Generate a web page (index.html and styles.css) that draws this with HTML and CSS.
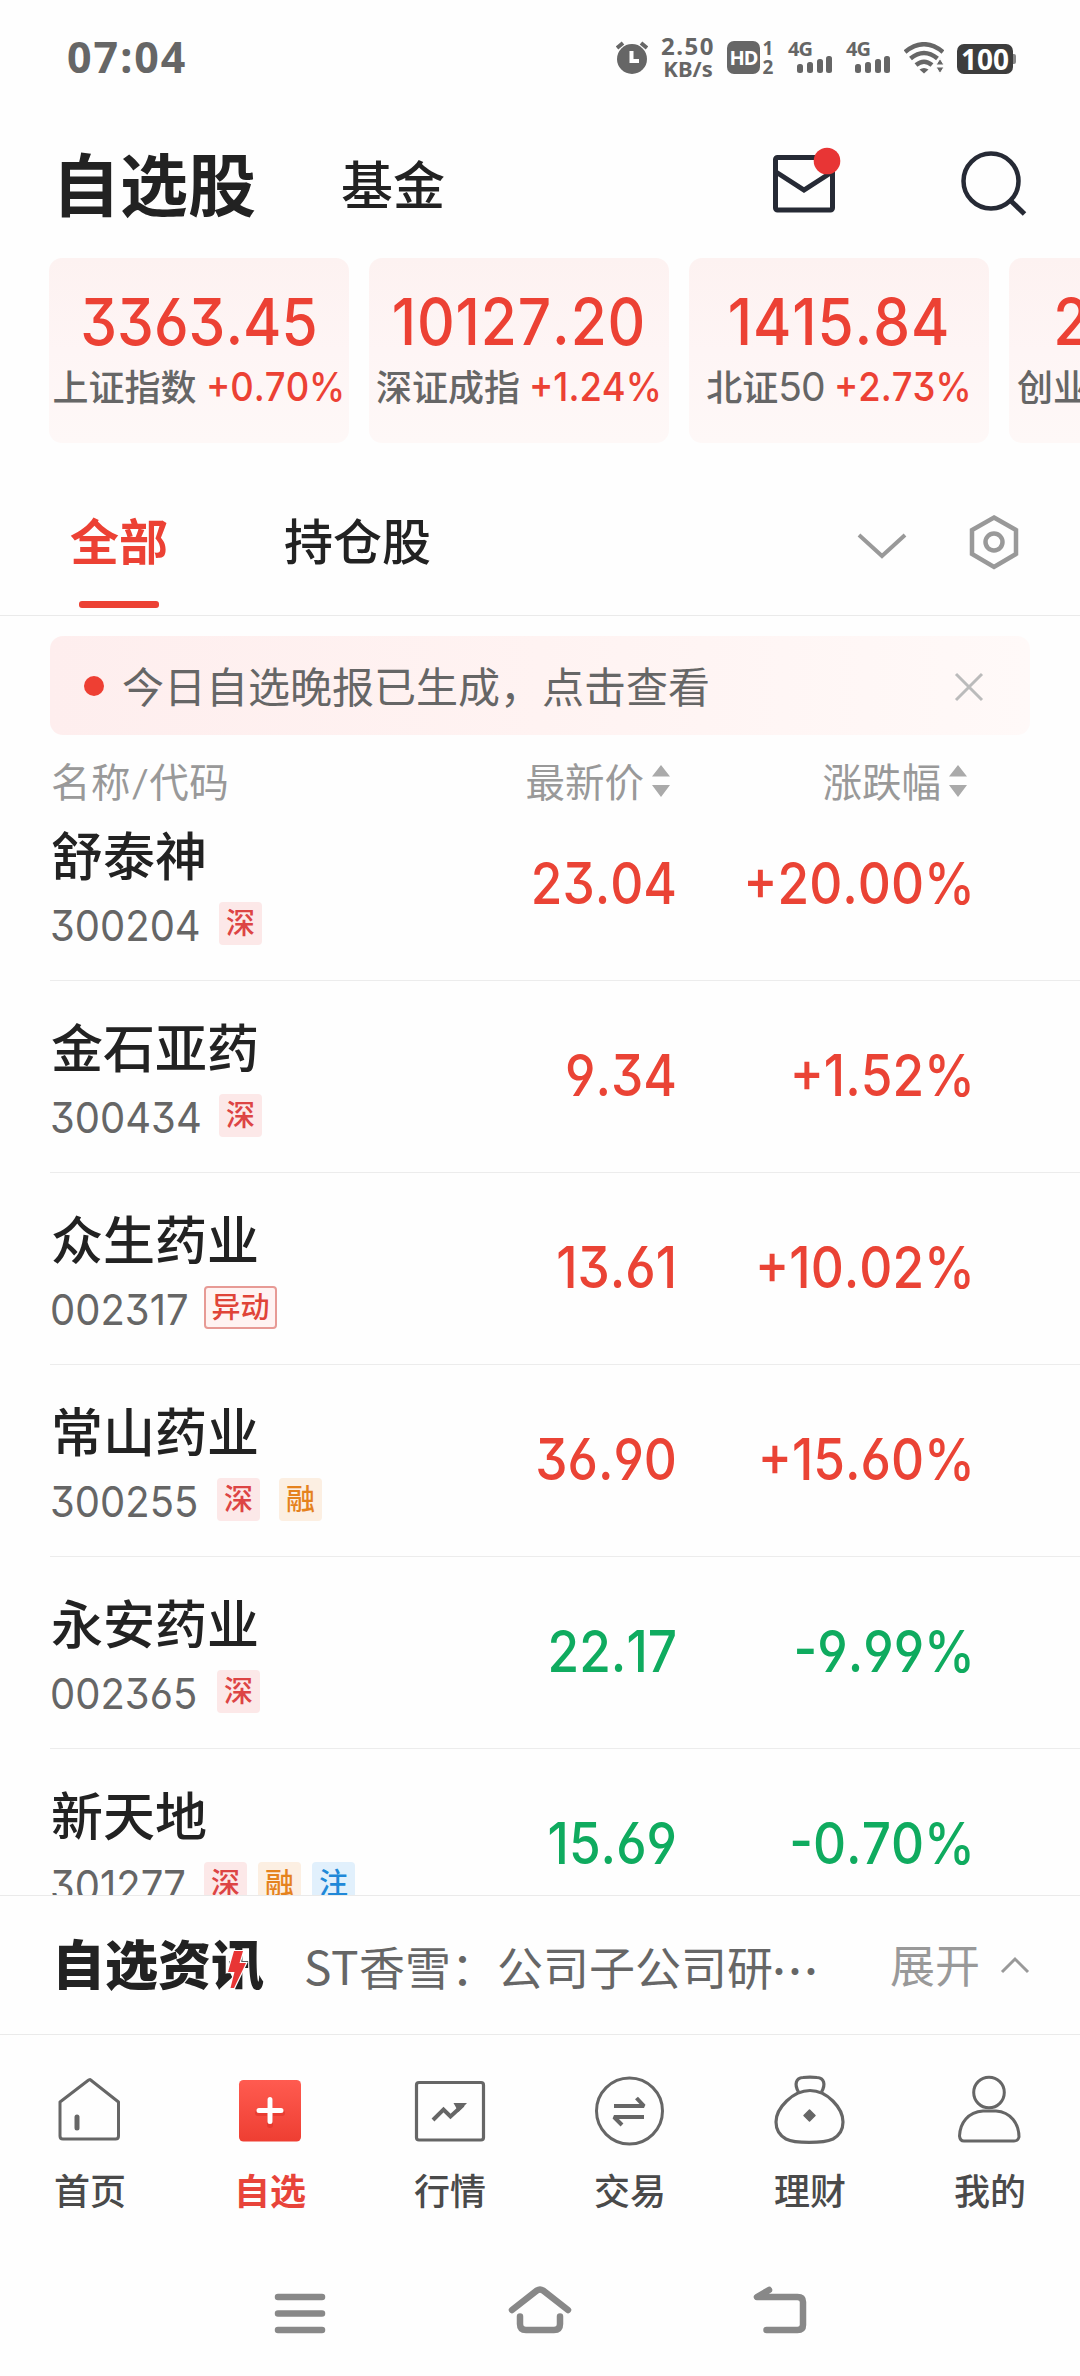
FILE: index.html
```html
<!DOCTYPE html>
<html lang="zh-CN">
<head>
    <meta charset="UTF-8">
    <meta name="viewport" content="width=device-width, initial-scale=1.0">
    <title>自选股</title>
    <link rel="stylesheet" href="styles.css">
</head>
<body>
    <div class="status-bar">
        <span class="clock">07:04</span>
        <div class="status-icons">
            <svg class="alarm" width="32" height="34" viewBox="0 0 32 34">
                <circle cx="16" cy="19" r="15" fill="#666"/>
                <path d="M1 8 L7 3 M31 8 L25 3" stroke="#666" stroke-width="4"/>
                <path d="M15.500 11 V21 H23" fill="none" stroke="#fff" stroke-width="4"/>
            </svg>
            <div class="net-speed"><span>2.50</span><span>KB/s</span></div>
            <div class="hd">HD</div>
            <div class="sim"><span>1</span><span>2</span></div>
            <div class="signal">
                <span>4G</span>
                <svg width="36" height="18" viewBox="0 0 36 18">
                    <g fill="#666">
                        <rect x="0" y="8" width="6" height="9" rx="2.500"/>
                        <rect x="10" y="6" width="6" height="11" rx="2.500"/>
                        <rect x="20" y="3" width="6" height="14" rx="2.500"/>
                        <rect x="29" y="0" width="6" height="17" rx="2.500"/>
                    </g>
                </svg>
            </div>
            <div class="signal">
                <span>4G</span>
                <svg width="36" height="18" viewBox="0 0 36 18">
                    <g fill="#666">
                        <rect x="0" y="8" width="6" height="9" rx="2.500"/>
                        <rect x="10" y="6" width="6" height="11" rx="2.500"/>
                        <rect x="20" y="3" width="6" height="14" rx="2.500"/>
                        <rect x="29" y="0" width="6" height="17" rx="2.500"/>
                    </g>
                </svg>
            </div>
            <svg class="wifi" width="40" height="32" viewBox="0 0 40 32">
                <g fill="none" stroke="#666" stroke-width="4.500">
                    <path d="M1 10 Q20 -5.500 39 10"/>
                    <path d="M6.500 16.500 Q20 5.500 33.500 16.500"/>
                    <path d="M12 23 Q20 16.500 28 23"/>
                </g>
                <path d="M15.500 27.500 Q20 24.500 24.500 27.500 L20 31.500 Z" fill="#666"/>
                <path d="M32 23 L36 16.500 L40 23 Z M32 25 H40 L36 31.500 Z" fill="#666" stroke="#fefefe" stroke-width="1"/>
            </svg>
            <div class="battery">100</div>
        </div>
    </div>

    <div class="header">
        <span class="title">自选股</span>
        <span class="sub-title">基金</span>
        <div class="header-icons">
            <svg width="74" height="76" viewBox="0 0 74 76">
                <rect x="5.500" y="11.500" width="57" height="52.500" rx="2" fill="none" stroke="#262a35" stroke-width="5"/>
                <path d="M6 26 L34 44 L62 26" fill="none" stroke="#262a35" stroke-width="5"/>
                <circle cx="57" cy="15" r="13.300" fill="#e83535"/>
            </svg>
            <svg width="74" height="76" viewBox="0 0 74 76">
                <circle cx="37" cy="35" r="27.500" fill="none" stroke="#262a35" stroke-width="4.500"/>
                <path d="M56.500 54.500 L70.500 68" stroke="#262a35" stroke-width="5"/>
            </svg>
        </div>
    </div>

    <div class="index-cards">
        <div class="card">
            <div class="card-value">3363.45</div>
            <div class="card-label">上证指数 <b>+0.70%</b></div>
        </div>
        <div class="card">
            <div class="card-value wide">10127.20</div>
            <div class="card-label">深证成指 <b>+1.24%</b></div>
        </div>
        <div class="card">
            <div class="card-value wide">1415.84</div>
            <div class="card-label">北证<span class="num">50</span> <b>+2.73%</b></div>
        </div>
        <div class="card">
            <div class="card-value">2101.89</div>
            <div class="card-label">创业板指 <b>+1.39%</b></div>
        </div>
    </div>

    <div class="tabs">
        <span class="tab active">全部</span>
        <span class="tab">持仓股</span>
        <div class="tab-icons">
            <svg width="50" height="60" viewBox="0 0 50 60">
                <path d="M2 22 L25 43 L48 22" fill="none" stroke="#999" stroke-width="4"/>
            </svg>
            <svg width="50" height="60" viewBox="0 0 50 60">
                <path d="M25 4.500 L47 17 V41 L25 54 L3 41 V17 Z" fill="none" stroke="#999" stroke-width="4.500"/>
                <circle cx="25" cy="29" r="8.500" fill="none" stroke="#999" stroke-width="4.500"/>
            </svg>
        </div>
    </div>

    <div class="notice">
        <span class="notice-dot"></span>
        <span class="notice-text">今日自选晚报已生成，点击查看</span>
        <svg width="30" height="30" viewBox="0 0 30 30">
            <path d="M2 2 L28 28 M28 2 L2 28" stroke="#bbb" stroke-width="3"/>
        </svg>
    </div>

    <div class="list-head">
        <span class="name-head">名称/代码</span>
        <span class="sort">最新价
            <svg width="18" height="34" viewBox="0 0 18 34"><path d="M0 12.500 L9 1 L18 12.500 Z M0 21 H18 L9 33 Z" fill="#aaa"/></svg>
        </span>
        <span class="sort">涨跌幅
            <svg width="18" height="34" viewBox="0 0 18 34"><path d="M0 12.500 L9 1 L18 12.500 Z M0 21 H18 L9 33 Z" fill="#aaa"/></svg>
        </span>
    </div>

    <div class="stock-list">
        <div class="stock up">
            <div class="stock-info">
                <div class="stock-name">舒泰神</div>
                <div class="stock-code"><span class="code">300204</span><i class="tag sz">深</i></div>
            </div>
            <div class="price">23.04</div>
            <div class="change">+20.00%</div>
        </div>
        <div class="stock up">
            <div class="stock-info">
                <div class="stock-name">金石亚药</div>
                <div class="stock-code"><span class="code">300434</span><i class="tag sz">深</i></div>
            </div>
            <div class="price">9.34</div>
            <div class="change">+1.52%</div>
        </div>
        <div class="stock up">
            <div class="stock-info">
                <div class="stock-name">众生药业</div>
                <div class="stock-code tight"><span class="code c3">002317</span><i class="tag move">异动</i></div>
            </div>
            <div class="price">13.61</div>
            <div class="change">+10.02%</div>
        </div>
        <div class="stock up">
            <div class="stock-info">
                <div class="stock-name">常山药业</div>
                <div class="stock-code"><span class="code c2">300255</span><i class="tag sz">深</i><i class="tag rong">融</i></div>
            </div>
            <div class="price">36.90</div>
            <div class="change">+15.60%</div>
        </div>
        <div class="stock down">
            <div class="stock-info">
                <div class="stock-name">永安药业</div>
                <div class="stock-code"><span class="code c2">002365</span><i class="tag sz">深</i></div>
            </div>
            <div class="price">22.17</div>
            <div class="change">-9.99%</div>
        </div>
        <div class="stock down">
            <div class="stock-info">
                <div class="stock-name">新天地</div>
                <div class="stock-code tight"><span class="code c3">301277</span><i class="tag sz">深</i><i class="tag rong">融</i><i class="tag zhu">注</i></div>
            </div>
            <div class="price">15.69</div>
            <div class="change">-0.70%</div>
        </div>
    </div>

    <div class="news">
        <div class="news-logo">自选资讯
            <svg class="bolt" width="22" height="40" viewBox="-2 -1 22 40">
                <path d="M6 0 H15 L11.500 12 H18 L6 37 H2.500 L6.500 21 H0 Z" fill="#e83535" stroke="#fefefe" stroke-width="2.500" paint-order="stroke"/>
            </svg>
        </div>
        <span class="news-text"><span class="st">ST</span>香雪：公司子公司研<span class="dots">···</span></span>
        <span class="expand">展开</span>
        <svg width="30" height="18" viewBox="0 0 30 18">
            <path d="M2 16 L15 3 L28 16" fill="none" stroke="#999" stroke-width="3"/>
        </svg>
    </div>

    <div class="bottom-nav">
        <div class="nav-item">
            <svg width="90" height="80" viewBox="0 0 90 80">
                <g fill="none" stroke="#666" stroke-width="3" stroke-linejoin="round" stroke-linecap="round">
                    <path d="M45 9.500 L73.500 32 V66 Q73.500 69 70.500 69 H18 Q15 69 15 66 V32 L43 10.500 Q44.500 9 46.500 10.500"/>
                    <path d="M32 47 V58" stroke-width="5"/>
                </g>
            </svg>
            <span>首页</span>
        </div>
        <div class="nav-item selected">
            <svg width="90" height="80" viewBox="0 0 90 80">
                <defs>
                    <linearGradient id="red" x1="0" y1="0" x2="0" y2="1">
                        <stop offset="0" stop-color="#ff5b50"/>
                        <stop offset="1" stop-color="#ee3e32"/>
                    </linearGradient>
                </defs>
                <rect x="14" y="10" width="62" height="61.500" rx="4.500" fill="url(#red)"/>
                <path d="M45 30 V55 M33 43 H57" stroke="#d5281f" stroke-width="6" stroke-linecap="round" opacity=".4"/>
                <path d="M45 29.500 V51.500 M34 40.500 H56" stroke="#fff" stroke-width="5" stroke-linecap="round"/>
            </svg>
            <span>自选</span>
        </div>
        <div class="nav-item">
            <svg width="90" height="80" viewBox="0 0 90 80">
                <rect x="11.500" y="12.500" width="67" height="57.500" rx="2.500" fill="none" stroke="#666" stroke-width="3.200"/>
                <path d="M28 50 L38.500 39.500 L45.500 46.500 L58 35" fill="none" stroke="#666" stroke-width="4"/>
                <path d="M48.500 33 H62 L53.500 42 Z" fill="#666"/>
            </svg>
            <span>行情</span>
        </div>
        <div class="nav-item">
            <svg width="90" height="80" viewBox="0 0 90 80">
                <circle cx="44.500" cy="41" r="33" fill="none" stroke="#666" stroke-width="3"/>
                <path d="M29 36 H59 L51.500 28 M59 47 H29 L37 55" fill="none" stroke="#666" stroke-width="4" stroke-linejoin="bevel"/>
            </svg>
            <span>交易</span>
        </div>
        <div class="nav-item">
            <svg width="90" height="80" viewBox="0 0 90 80">
                <g fill="none" stroke="#666" stroke-width="3.200">
                    <path d="M45 20.500 C62 20.500 78 38 78 52 C78 60 75 65 68 69 C58 73.500 30 73.500 21 69 C14 65 11 60 11 52 C11 38 28 20.500 45 20.500 Z"/>
                    <path d="M33.500 22 C29 14 31 8 38 7.500 Q45 6.800 52 7.500 C59 8 61 14 56.500 22"/>
                </g>
                <path d="M44.500 40 L50 45.500 L44.500 51 L39 45.500 Z" fill="#666" stroke="#666" stroke-width="1.500" stroke-linejoin="round"/>
            </svg>
            <span>理财</span>
        </div>
        <div class="nav-item">
            <svg width="90" height="80" viewBox="0 0 90 80">
                <g fill="none" stroke="#666" stroke-width="3">
                    <circle cx="44" cy="22.500" r="15.300"/>
                    <path d="M38 41 H51 C66 42 74 54 74 67 Q73 71 69 71 H19 Q15 71 14.500 66 C15 53 23 42 38 41 Z"/>
                </g>
            </svg>
            <span>我的</span>
        </div>
    </div>

    <div class="system-nav">
        <svg width="64" height="60" viewBox="0 0 64 60">
            <path d="M10 17 H54 M10 33.500 H54 M10 50 H54" stroke="#888" stroke-width="6.500" stroke-linecap="round"/>
        </svg>
        <svg width="64" height="60" viewBox="0 0 64 60">
            <g fill="none" stroke="#888" stroke-width="6.500" stroke-linecap="round">
                <path d="M4 30 L29 10.500 Q32 8.500 35 10.500 L60 30"/>
                <path d="M12 36.500 V44 Q12 50 18 50 H46 Q52 50 52 44 V36.500"/>
            </g>
        </svg>
        <svg width="64" height="60" viewBox="0 0 64 60">
            <path d="M21 10 L9 17 H49.500 Q55 17 55 22 V45 Q55 50 49.500 50 H18.500" fill="none" stroke="#888" stroke-width="6.500" stroke-linecap="round" stroke-linejoin="round"/>
        </svg>
    </div>
</body>
</html>
```
FILE: styles.css
```css
* {
    box-sizing: border-box;
}
body {
    margin: 0;
    width: 1080px;
    height: 2376px;
    overflow: hidden;
    display: flex;
    flex-direction: column;
    background-color: #fefefe;
    color: #222;
    font-family: Lato, "Noto Sans CJK SC", sans-serif;
}
svg {
    display: block;
    flex: none;
}
.status-bar {
    height: 116px;
    padding: 0 67px 0 67px;
    display: flex;
    justify-content: space-between;
    color: #666;
    font-family: "Noto Sans", sans-serif;
    font-weight: 700;
}
.clock {
    font-size: 43px;
    line-height: 60px;
    margin-top: 27px;
    letter-spacing: 2px;
}
.status-icons {
    display: flex;
    height: 50px;
    margin-top: 34px;
}
.alarm {
    margin-top: 6px;
}
.net-speed {
    width: 56px;
    margin-left: 12px;
    display: flex;
    flex-direction: column;
    text-align: center;
    font-size: 24px;
    line-height: 23px;
    letter-spacing: 1.5px;
}
.net-speed span + span {
    font-size: 22px;
    letter-spacing: 0;
}
.hd {
    width: 33px;
    height: 33px;
    margin: 7px 0 0 11px;
    border-radius: 7px;
    background-color: #666;
    color: #fff;
    font-size: 20px;
    line-height: 33px;
    letter-spacing: -1px;
    text-align: center;
}
.sim {
    width: 14px;
    margin: 5px 0 0 1px;
    display: flex;
    flex-direction: column;
    font-size: 19px;
    line-height: 19px;
    text-align: center;
}
.signal {
    width: 45px;
    margin: 6px 0 0 13px;
}
.signal span {
    display: block;
    font-size: 20px;
    line-height: 18px;
    letter-spacing: -1px;
}
.signal svg {
    margin: -2px 0 0 9px;
}
.wifi {
    margin: 8px 0 0 13px;
}
.battery {
    position: relative;
    width: 56px;
    height: 30px;
    margin: 10px 0 0 13px;
    border-radius: 7px;
    background-color: #3d3d3d;
    color: #fff;
    font-size: 28px;
    line-height: 30px;
    text-align: center;
}
.battery::after {
    content: "";
    position: absolute;
    right: -3px;
    top: 10px;
    width: 3px;
    height: 10px;
    border-radius: 0 2px 2px 0;
    background-color: #888;
}
.header {
    height: 142px;
    padding: 0 52px 4px 52px;
    display: flex;
    align-items: center;
}
.title {
    width: 289px;
    font-size: 68px;
    font-weight: 700;
    line-height: 90px;
}
.sub-title {
    font-size: 52px;
    font-weight: 500;
    line-height: 70px;
}
.header-icons {
    display: flex;
    gap: 110px;
    margin: -3px 0 0 auto;
}
.index-cards {
    display: flex;
    gap: 20px;
    height: 186px;
    padding-left: 49px;
}
.card {
    flex: none;
    width: 300px;
    height: 185px;
    padding-top: 29px;
    border-radius: 13px;
    background: linear-gradient(#fdf2f1, #fef5f5 50%, #fef8f7);
    color: #ec4134;
    text-align: center;
    white-space: nowrap;
}
/* narrowed digits with flat-top 3 and open 6/9 */
.card-value, .card-label b, .num, .code, .price, .change {
    font-family: Inter, "Noto Sans", sans-serif;
    font-feature-settings: "cv09", "cv03", "cv04";
    font-kerning: none;
}
.card-value {
    font-size: 65px;
    font-weight: 500;
    line-height: 70px;
    transform: scaleX(0.9);
}
.card-value.wide {
    letter-spacing: 1px;
}
.card-label {
    color: #666;
    font-size: 36px;
    font-weight: 500;
    line-height: 60px;
}
.card-label b {
    display: inline-block;
    margin-right: -13px;
    color: #ec4134;
    font-size: 40px;
    font-weight: 500;
    line-height: 50px;
    transform: scaleX(0.91);
    transform-origin: left;
}
.num {
    font-size: 39px;
    font-weight: 400;
    letter-spacing: -1px;
}
.tabs {
    height: 172px;
    padding: 57px 61px 0 70px;
    display: flex;
    align-items: flex-start;
    border-bottom: 1px solid #eaeaea;
}
.tab {
    position: relative;
    margin-right: 116px;
    font-size: 49px;
    font-weight: 500;
    line-height: 80px;
}
.tab.active {
    color: #ec4134;
    font-weight: 700;
}
.tab.active::after {
    content: "";
    position: absolute;
    left: 9px;
    top: 100px;
    width: 80px;
    height: 7px;
    border-radius: 3px;
    background-color: #ec4134;
}
.tab-icons {
    display: flex;
    gap: 62px;
    margin: 12px 0 0 auto;
}
.notice {
    display: flex;
    align-items: center;
    flex: none;
    width: 980px;
    height: 99px;
    margin: 20px 0 0 50px;
    padding: 2px 46px 0 34px;
    border-radius: 13px;
    background: linear-gradient(90deg, #feeeee, #fff3f2 50%, #fff9f8);
}
.notice-dot {
    width: 20px;
    height: 20px;
    margin: -2px 18px 0 0;
    border-radius: 50%;
    background-color: #ee3f33;
}
.notice-text {
    flex: 1;
    color: #666;
    font-size: 42px;
    line-height: 60px;
}
.list-head {
    display: grid;
    grid-template-columns: 420px 199px 297px;
    height: 74px;
    padding: 17px 0 0 51px;
    color: #999;
    font-size: 39.5px;
    line-height: 60px;
}
.name-head {
    letter-spacing: 0.5px;
}
.sort {
    display: flex;
    justify-content: flex-end;
    gap: 8px;
}
.sort svg {
    margin-top: 12px;
}
.stock-list {
    height: 1086px;
    overflow: hidden;
}
.stock {
    display: grid;
    grid-template-columns: 420px 207px 298px;
    height: 192px;
    margin-left: 50px;
    padding-top: 20px;
    border-bottom: 1px solid #ececec;
}
.stock:first-child {
    height: 172px;
    padding-top: 0;
}
.stock-name {
    margin: 12px 0 0 1px;
    font-size: 52px;
    font-weight: 500;
    line-height: 70px;
}
.stock-code {
    display: flex;
    gap: 19px;
    height: 43px;
    margin-top: 11px;
    color: #666;
}
.stock-code.tight {
    gap: 11px;
}
.code {
    width: 150px;
    font-size: 43px;
    line-height: 46px;
    transform: scaleX(0.93);
    transform-origin: left;
}
.code.c2 {
    width: 148px;
}
.code.c3 {
    width: 143px;
}
.tag {
    flex: none;
    width: 43px;
    height: 43px;
    border-radius: 4px;
    font-size: 29px;
    font-style: normal;
    font-weight: 500;
    line-height: 42px;
    text-align: center;
}
.sz {
    background-color: #fce8e8;
    color: #dd4444;
}
.rong {
    background-color: #fcefe2;
    color: #e5821e;
}
.zhu {
    background-color: #e1f0fc;
    color: #2088d8;
}
.move {
    width: 73px;
    border: 2px solid #e79a95;
    background-color: #fff3f2;
    color: #e04438;
    line-height: 38px;
}
.price, .change {
    padding-top: 40px;
    font-size: 57px;
    font-weight: 500;
    line-height: 70px;
    text-align: right;
    transform: scaleX(0.9);
    transform-origin: right;
}
.up .price, .up .change {
    color: #ea4335;
}
.down .price, .down .change {
    color: #0fab5f;
}
.news {
    display: flex;
    align-items: center;
    height: 140px;
    padding: 0 50px 0 52px;
    border-top: 1px solid #eaeaea;
    border-bottom: 1px solid #eaeaea;
}
.news-logo {
    position: relative;
    width: 252px;
    font-size: 53px;
    font-weight: 900;
    line-height: 70px;
    white-space: nowrap;
}
.bolt {
    position: absolute;
    left: 174px;
    top: 20px;
}
.news-text {
    flex: 1;
    padding-top: 2px;
    color: #666;
    font-size: 46px;
    line-height: 60px;
    white-space: nowrap;
}
.st {
    font-family: "Noto Sans CJK SC", sans-serif;
    letter-spacing: 0.5px;
}
.dots {
    letter-spacing: 4px;
}
.expand {
    margin-right: 20px;
    padding-top: 2px;
    color: #999;
    font-size: 45px;
    line-height: 60px;
}
.bottom-nav {
    display: flex;
    height: 205px;
    padding-top: 35px;
}
.nav-item {
    width: 180px;
    display: flex;
    flex-direction: column;
    align-items: center;
    color: #4a4a4a;
    font-size: 36px;
    font-weight: 500;
    line-height: 50px;
}
.nav-item span {
    margin-top: 16px;
}
.nav-item.selected {
    color: #e8443a;
    font-weight: 700;
}
.system-nav {
    display: flex;
    gap: 176px;
    padding: 40px 0 0 268px;
}
```
